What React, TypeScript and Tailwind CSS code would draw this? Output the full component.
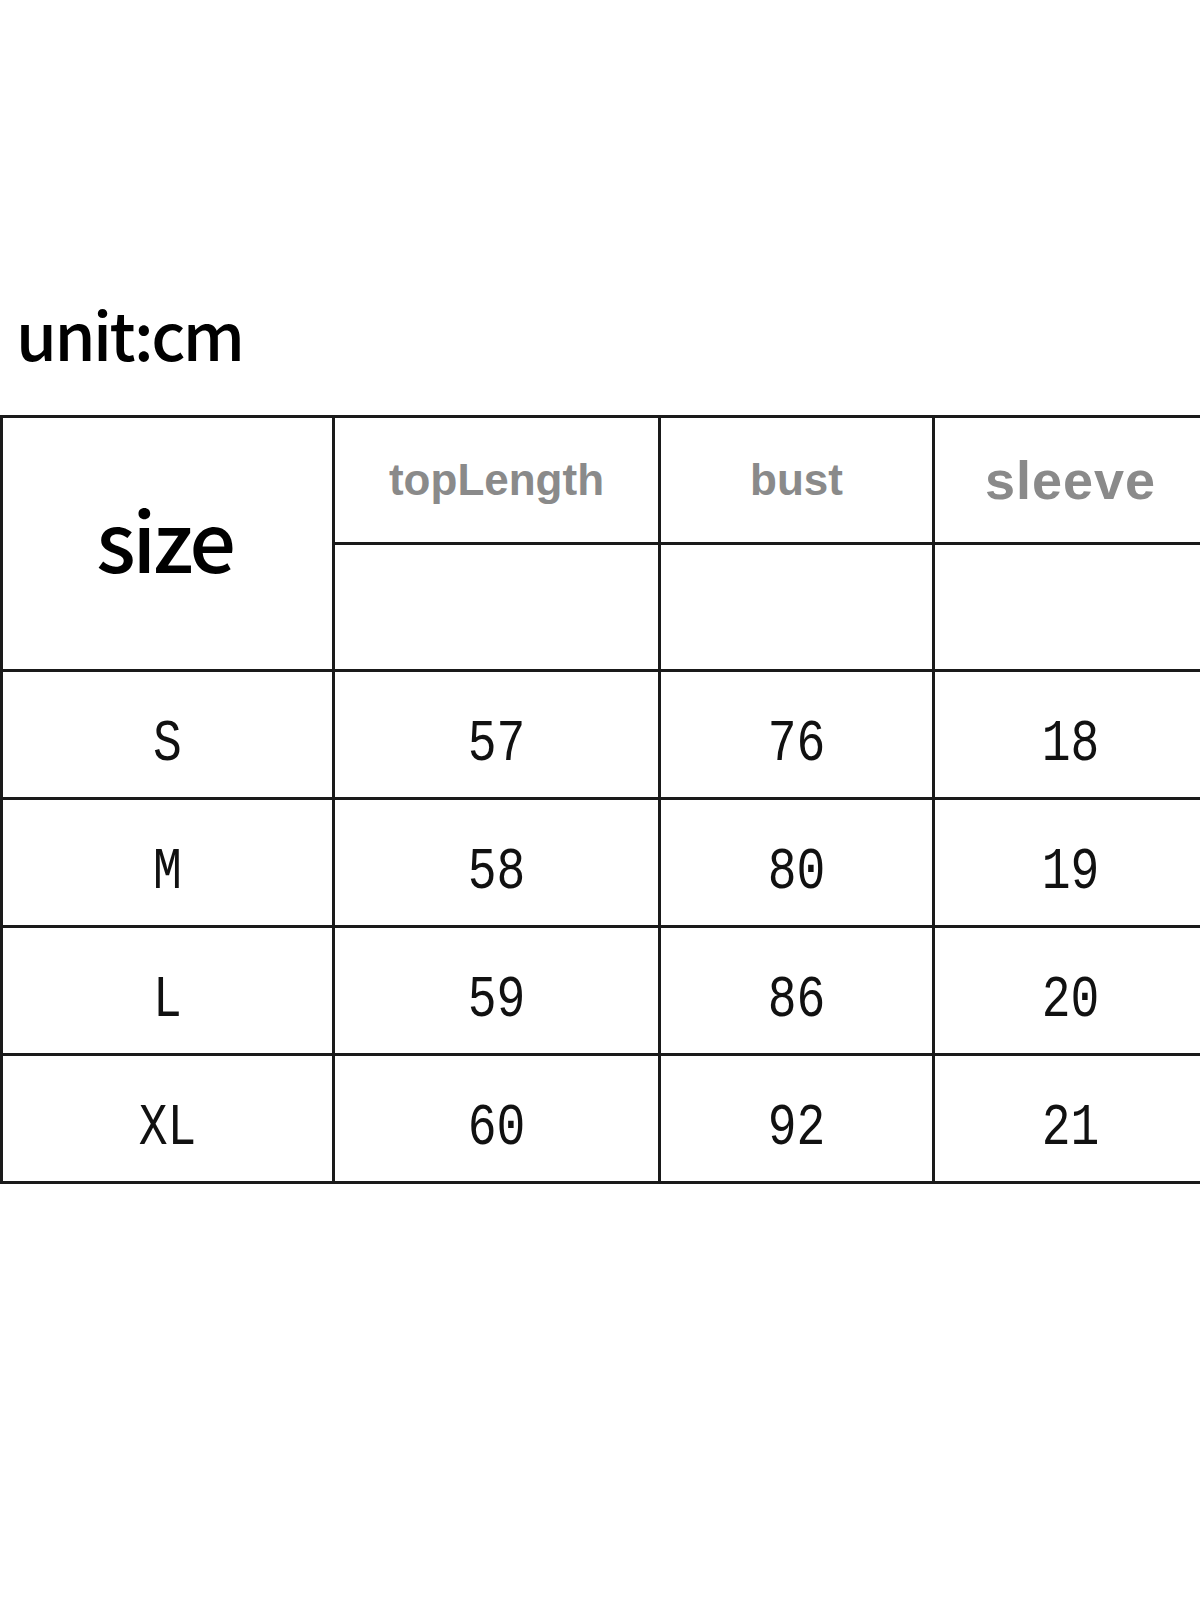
export default function App() {
  const rows = [
    ["S", "57", "76", "18"],
    ["M", "58", "80", "19"],
    ["L", "59", "86", "20"],
    ["XL", "60", "92", "21"],
  ];
  const cell = "border-[3px] border-[#1a1a1a] p-0 text-center align-middle";
  return (
    <div className="w-[1200px] h-[1600px] bg-white overflow-hidden">
      <div className="pt-[299px] pl-[16px] h-[415px] text-[66px] font-medium tracking-[-2.5px] leading-none text-black font-['Noto_Sans_CJK_SC',sans-serif]">
        unit:cm
      </div>
      <table className="border-collapse table-fixed w-[1206px]">
        <colgroup>
          <col className="w-[332px]" />
          <col className="w-[326px]" />
          <col className="w-[274px]" />
          <col className="w-[274px]" />
        </colgroup>
        <tbody>
          <tr className="h-[127px]">
            <td rowSpan={2} className={`${cell} text-[82px] font-medium tracking-[-3px] leading-none text-black font-['Noto_Sans_CJK_SC',sans-serif]`}>
              <span className="relative top-[-6px] left-[-3px]">size</span>
            </td>
            <td className={`${cell} text-[44px] font-bold text-[#8a8a8a] font-['Liberation_Sans',Arial,sans-serif]`}>topLength</td>
            <td className={`${cell} text-[44px] font-bold text-[#8a8a8a] font-['Liberation_Sans',Arial,sans-serif]`}>bust</td>
            <td className={`${cell} text-[54px] font-bold tracking-[1px] text-[#8a8a8a] font-['Liberation_Sans',Arial,sans-serif]`}>sleeve</td>
          </tr>
          <tr className="h-[127px]">
            <td className={cell}></td>
            <td className={cell}></td>
            <td className={cell}></td>
          </tr>
          {rows.map((r) => (
            <tr key={r[0]} className="h-[128px]">
              {r.map((v, i) => (
                <td key={i} className={`${cell} text-[48px] text-[#111] font-['Liberation_Mono','Courier_New',monospace]`}>
                  <span className="inline-block scale-y-125 pt-[14px]">{v}</span>
                </td>
              ))}
            </tr>
          ))}
        </tbody>
      </table>
    </div>
  );
}
